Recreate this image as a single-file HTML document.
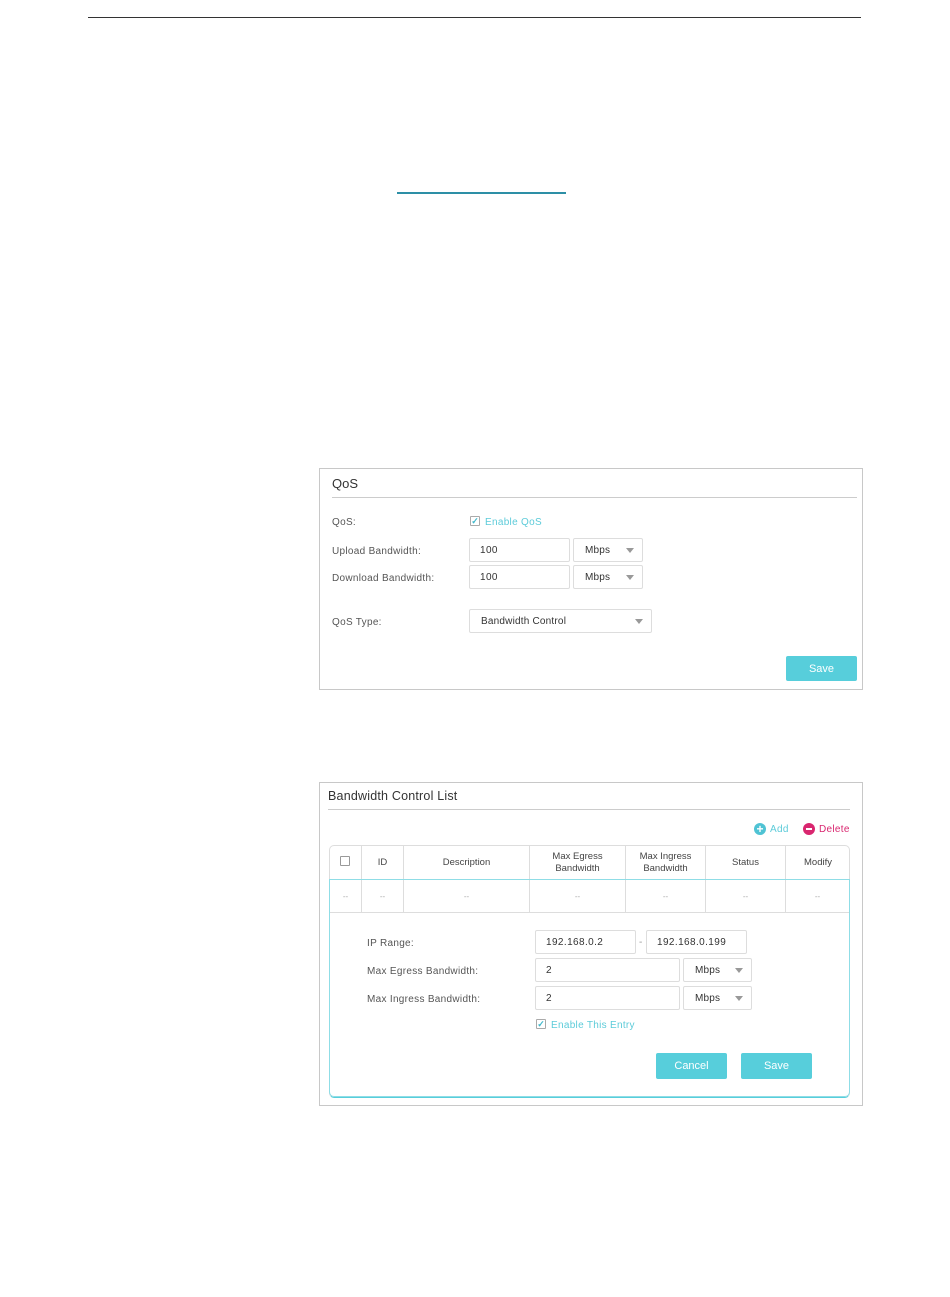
<!DOCTYPE html>
<html><head><meta charset="utf-8"><style>
*{box-sizing:border-box;margin:0;padding:0}
body{width:950px;height:1297px;background:#fff;position:relative;font-family:"Liberation Sans",sans-serif;color:#444;overflow:hidden}
.a{position:absolute}
.t{font-size:10px;color:#555;white-space:nowrap;letter-spacing:0.3px}
.box{position:absolute;border:1px solid #ddd;border-radius:2px;background:#fff;font-size:10px;color:#333;padding-left:10px;display:flex;align-items:center;letter-spacing:0.4px}
.dd{position:absolute;border:1px solid #ddd;border-radius:2px;font-size:10px;color:#333;padding-left:11px;display:flex;align-items:center;letter-spacing:0.2px}
.dd:after{content:"";position:absolute;right:8px;top:50%;margin-top:-2px;border-left:4px solid transparent;border-right:4px solid transparent;border-top:5px solid #999}
.btn{position:absolute;background:#57cedb;color:#fff;font-size:11px;display:flex;align-items:center;justify-content:center;border-radius:2px}
.chk{position:absolute;width:10px;height:10px;border:1px solid #aaa;border-radius:1px;font-size:9px;color:#3fb8cb;line-height:8px;text-align:center;font-weight:bold}
.th{position:absolute;top:846px;height:33px;display:flex;align-items:center;justify-content:center;text-align:center;font-size:9.5px;color:#444;line-height:12px;border-left:1px solid #ddd}
.td{position:absolute;top:880px;height:32px;display:flex;align-items:center;justify-content:center;font-size:8px;color:#aaa;border-left:1px solid #ddd}
</style></head><body>
<div class="a" style="left:88px;top:17px;width:773px;height:1px;background:#333"></div>
<div class="a" style="left:397px;top:192px;width:169px;height:2px;background:#2d8fa6"></div>

<!-- QoS panel -->
<div class="a" style="left:319px;top:468px;width:544px;height:222px;border:1px solid #c8c8c8"></div>
<div class="a" style="left:332px;top:476px;font-size:13px;color:#333">QoS</div>
<div class="a" style="left:332px;top:497px;width:525px;height:1px;background:#ccc"></div>
<div class="a t" style="left:332px;top:517px">QoS:</div>
<div class="chk" style="left:470px;top:516px">✓</div>
<div class="a t" style="left:485px;top:517px;color:#5ccbd9">Enable QoS</div>
<div class="a t" style="left:332px;top:546px">Upload Bandwidth:</div>
<div class="box" style="left:469px;top:538px;width:101px;height:24px">100</div>
<div class="dd" style="left:573px;top:538px;width:70px;height:24px">Mbps</div>
<div class="a t" style="left:332px;top:573px">Download Bandwidth:</div>
<div class="box" style="left:469px;top:565px;width:101px;height:24px">100</div>
<div class="dd" style="left:573px;top:565px;width:70px;height:24px">Mbps</div>
<div class="a t" style="left:332px;top:617px">QoS Type:</div>
<div class="dd" style="left:469px;top:609px;width:183px;height:24px">Bandwidth Control</div>
<div class="btn" style="left:786px;top:656px;width:71px;height:25px">Save</div>

<!-- Bandwidth Control List -->
<div class="a" style="left:319px;top:782px;width:544px;height:324px;border:1px solid #c8c8c8"></div>
<div class="a" style="left:328px;top:789px;font-size:12.5px;color:#333;letter-spacing:0.2px">Bandwidth Control List</div>
<div class="a" style="left:328px;top:809px;width:522px;height:1px;background:#ccc"></div>
<div class="a" style="left:754px;top:823px;width:12px;height:12px;border-radius:50%;background:#4fc3d4;color:#fff;font-size:12px;line-height:12px;text-align:center;font-weight:bold">+</div>
<div class="a t" style="left:770px;top:824px;color:#5ccbd9">Add</div>
<div class="a" style="left:803px;top:823px;width:12px;height:12px;border-radius:50%;background:#d9266f"><div style="position:absolute;left:3px;top:5px;width:6px;height:2px;background:#fff"></div></div>
<div class="a t" style="left:819px;top:824px;color:#d9266f">Delete</div>

<div class="a" style="left:329px;top:845px;width:521px;height:253px;border:1px solid #ddd;border-bottom:1.5px solid #57cedb;border-radius:5px"></div>
<div class="a" style="left:329px;top:879px;width:521px;height:218px;border:1px solid #8fdde6;border-radius:0 0 5px 5px"></div>
<div class="chk" style="left:340px;top:856px;border-color:#999"></div>
<div class="th" style="left:361px;width:42px">ID</div>
<div class="th" style="left:403px;width:126px">Description</div>
<div class="th" style="left:529px;width:96px">Max Egress<br>Bandwidth</div>
<div class="th" style="left:625px;width:80px">Max Ingress<br>Bandwidth</div>
<div class="th" style="left:705px;width:80px">Status</div>
<div class="th" style="left:785px;width:65px;">Modify</div>
<div class="td" style="left:330px;width:31px;border-left:none">--</div>
<div class="td" style="left:361px;width:42px">--</div>
<div class="td" style="left:403px;width:126px">--</div>
<div class="td" style="left:529px;width:96px">--</div>
<div class="td" style="left:625px;width:80px">--</div>
<div class="td" style="left:705px;width:80px">--</div>
<div class="td" style="left:785px;width:64px">--</div>
<div class="a" style="left:330px;top:912px;width:519px;height:1px;background:#ddd"></div>

<div class="a t" style="left:367px;top:938px">IP Range:</div>
<div class="box" style="left:535px;top:930px;width:101px;height:24px">192.168.0.2</div>
<div class="a t" style="left:639px;top:937px;color:#999">-</div>
<div class="box" style="left:646px;top:930px;width:101px;height:24px">192.168.0.199</div>
<div class="a t" style="left:367px;top:966px">Max Egress Bandwidth:</div>
<div class="box" style="left:535px;top:958px;width:145px;height:24px">2</div>
<div class="dd" style="left:683px;top:958px;width:69px;height:24px">Mbps</div>
<div class="a t" style="left:367px;top:994px">Max Ingress Bandwidth:</div>
<div class="box" style="left:535px;top:986px;width:145px;height:24px">2</div>
<div class="dd" style="left:683px;top:986px;width:69px;height:24px">Mbps</div>
<div class="chk" style="left:536px;top:1019px">✓</div>
<div class="a t" style="left:551px;top:1020px;color:#5ccbd9">Enable This Entry</div>
<div class="btn" style="left:656px;top:1053px;width:71px;height:26px">Cancel</div>
<div class="btn" style="left:741px;top:1053px;width:71px;height:26px">Save</div>
</body></html>
